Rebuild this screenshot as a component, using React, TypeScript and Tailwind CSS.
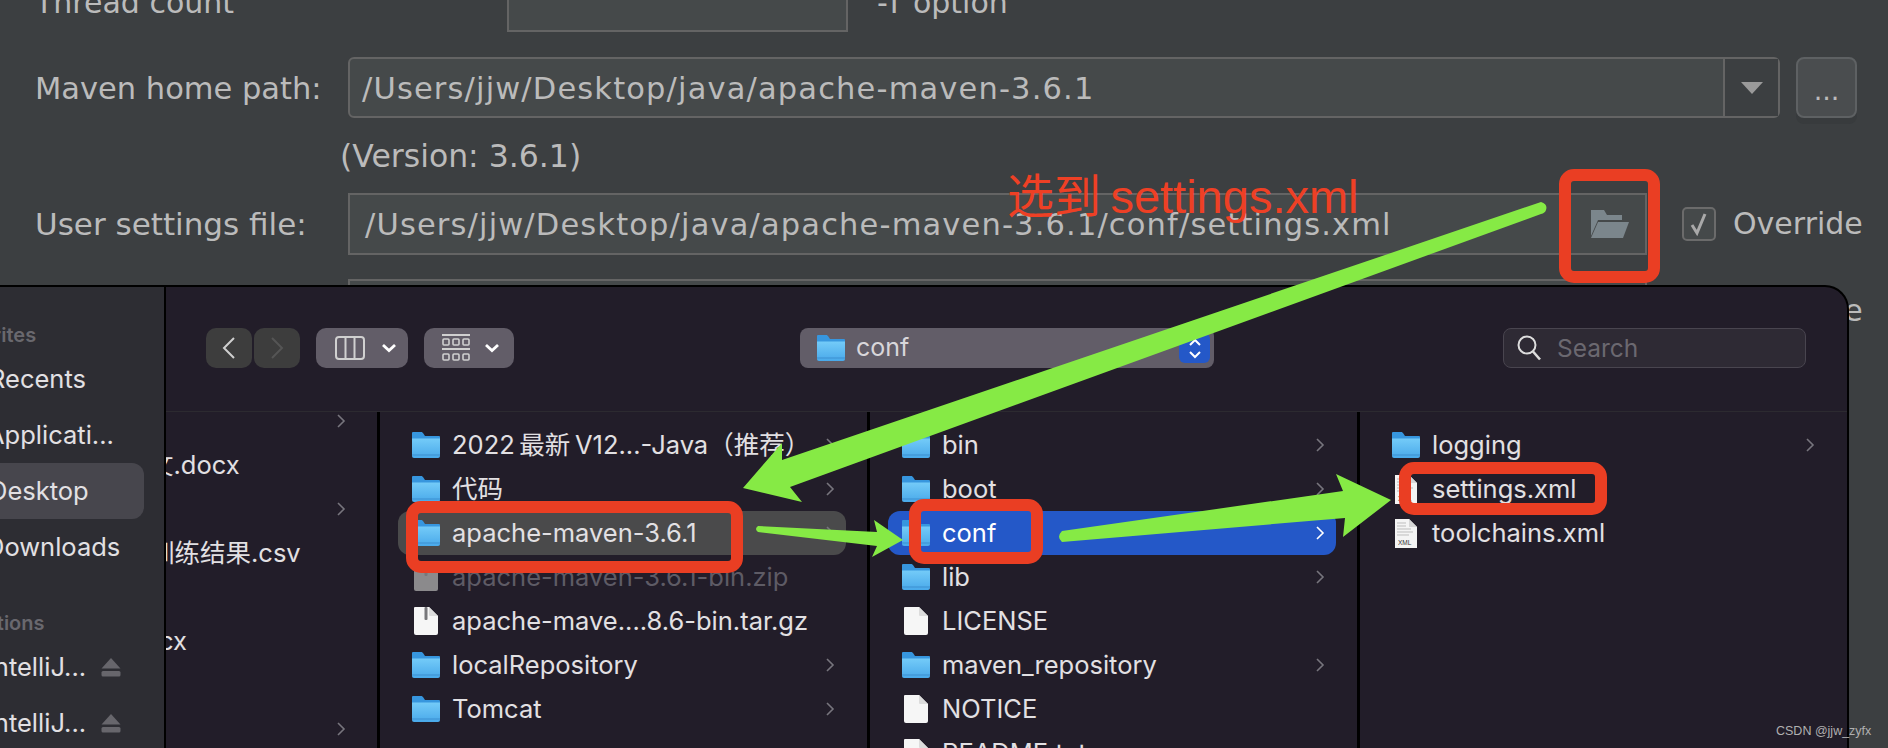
import React from "react";

const FolderIcon = () => (
  <svg width="28" height="26" viewBox="0 0 28 26" className="shrink-0">
    <defs>
      <linearGradient id="folderFront" x1="0" y1="0" x2="0" y2="1">
        <stop offset="0" stopColor="#74cbf8" />
        <stop offset="1" stopColor="#49a9ea" />
      </linearGradient>
    </defs>
    <path d="M1 0h8c1 0 1.500.500 2 1l2 3h14a1 1 0 0 1 1 1v12H0V1a1 1 0 0 1 1-1z" fill="#3796de" />
    <path d="M0 6.500h28V24a2 2 0 0 1-2 2H2a2 2 0 0 1-2-2z" fill="url(#folderFront)" />
    <path d="M0 23h28" stroke="#3d8fd0" strokeWidth="1" />
  </svg>
);

const FileIcon = ({ zip, dim }: { zip?: boolean; dim?: boolean }) => (
  <svg width="28" height="28" viewBox="0 0 28 28" className="shrink-0">
    <path d="M2 1a1 1 0 0 1 1-1h14l9 9v17a2 2 0 0 1-2 2H4a2 2 0 0 1-2-2z" fill={dim ? "#8b8a8c" : "#f6f6f6"} />
    <path d="M17 0l9 9h-8a1 1 0 0 1-1-1z" fill={dim ? "#a8a8a8" : "#dcdcdc"} />
    {zip && <rect x="12.500" y="0" width="3" height="13" rx="1" fill="#77777a" />}
  </svg>
);

const XmlIcon = () => (
  <svg width="28" height="29" viewBox="0 0 28 29" className="shrink-0">
    <path d="M3 0h14l8 8v21H3z" fill="#f4f4f4" />
    <path d="M17 0l8 8h-8z" fill="#d6d6d6" />
    <path d="M5 4h9M5 7h9M5 10h14M5 13h16M5 16h12" stroke="#bdbdbd" strokeWidth="1" />
    <text x="6" y="26" fontSize="6.500" fontFamily="Liberation Sans" fill="#333">XML</text>
  </svg>
);

const Chevron = ({ color = "#77757d" }: { color?: string }) => (
  <svg width="10" height="16" viewBox="0 0 10 16" className="shrink-0">
    <path d="M2 2l6 6-6 6" fill="none" stroke={color} strokeWidth="1.600" />
  </svg>
);

const Eject = () => (
  <svg width="20" height="19" viewBox="0 0 20 19" className="shrink-0">
    <path d="M10 0l9.500 10.500H.5z" fill="#67666c" />
    <rect x=".5" y="13" width="19" height="5.500" rx="1.500" fill="#67666c" />
  </svg>
);

type Row = { name: string; kind: "folder" | "file" | "zip" | "zipDim" | "xml"; arrow?: boolean; sel?: "gray" | "blue" };

const col2: Row[] = [
  { name: "2022\u2009最新\u2009V12...-Java（推荐）", kind: "folder", arrow: true },
  { name: "代码", kind: "folder", arrow: true },
  { name: "apache-maven-3.6.1", kind: "folder", arrow: true, sel: "gray" },
  { name: "apache-maven-3.6.1-bin.zip", kind: "zipDim" },
  { name: "apache-mave....8.6-bin.tar.gz", kind: "zip" },
  { name: "localRepository", kind: "folder", arrow: true },
  { name: "Tomcat", kind: "folder", arrow: true },
];

const col3: Row[] = [
  { name: "bin", kind: "folder", arrow: true },
  { name: "boot", kind: "folder", arrow: true },
  { name: "conf", kind: "folder", arrow: true, sel: "blue" },
  { name: "lib", kind: "folder", arrow: true },
  { name: "LICENSE", kind: "file" },
  { name: "maven_repository", kind: "folder", arrow: true },
  { name: "NOTICE", kind: "file" },
  { name: "README.txt", kind: "file" },
];

const col4: Row[] = [
  { name: "logging", kind: "folder", arrow: true },
  { name: "settings.xml", kind: "xml" },
  { name: "toolchains.xml", kind: "xml" },
];

const FileRow = ({ row }: { row: Row }) => (
  <div
    className={`flex h-[44px] items-center rounded-[12px] pl-[14px] pr-[11px] ${
      row.sel === "gray" ? "bg-[#4a4a4b]" : row.sel === "blue" ? "bg-[#2458c8]" : ""
    }`}
  >
    {row.kind === "folder" && <FolderIcon />}
    {row.kind === "file" && <FileIcon />}
    {row.kind === "zip" && <FileIcon zip />}
    {row.kind === "zipDim" && <FileIcon zip dim />}
    {row.kind === "xml" && <XmlIcon />}
    <span
      className={`ml-[12px] flex-1 whitespace-nowrap text-[25.500px] ${
        row.kind === "zipDim" ? "text-[#5e5b65]" : row.sel === "blue" ? "text-white" : "text-[#e2e0e3]"
      }`}
    >
      {row.name}
    </span>
    {row.arrow && <Chevron color={row.sel === "blue" ? "#ffffff" : "#77757d"} />}
  </div>
);

const Column = ({ rows, last }: { rows: Row[]; last?: boolean }) => (
  <div className={`shrink-0 pl-[18px] pr-[21px] pt-[11px] ${last ? "w-[487px]" : "w-[490px] border-r-[3px] border-black"}`}>
    {rows.map((r) => (
      <FileRow key={r.name} row={r} />
    ))}
  </div>
);

const Sidebar = () => (
  <div className="w-[166px] shrink-0 overflow-hidden border-r-[2px] border-black bg-[#2d2d33] pt-[32px] text-[25.500px] text-[#e2e0e3]">
    <div className="-ml-[53px] h-[32px] whitespace-nowrap text-[20px] leading-[32px] font-semibold text-[#69686e]">Favorites</div>
    <div className="flex h-[56px] items-center -ml-[11px] whitespace-nowrap">Recents</div>
    <div className="flex h-[56px] items-center -ml-[13px] whitespace-nowrap">Applicati...</div>
    <div className="flex h-[56px] w-[144px] items-center overflow-hidden rounded-r-[12px] bg-[#47464d] whitespace-nowrap">
      <span className="-ml-[11px]">Desktop</span>
    </div>
    <div className="flex h-[56px] items-center -ml-[14px] whitespace-nowrap">Downloads</div>
    <div className="-ml-[50px] mt-[32px] h-[32px] whitespace-nowrap text-[20px] leading-[32px] font-semibold text-[#69686e]">Locations</div>
    <div className="flex h-[56px] items-center whitespace-nowrap">
      <span className="-ml-[13px] w-[114px]">IntelliJ...</span>
      <Eject />
    </div>
    <div className="flex h-[56px] items-center whitespace-nowrap">
      <span className="-ml-[13px] w-[114px]">IntelliJ...</span>
      <Eject />
    </div>
  </div>
);

const Toolbar = () => (
  <div className="flex h-[125px] shrink-0 items-start border-b border-[#2c2a30] pl-[40px] pt-[41px]">
    <div className="flex h-[40px] w-[46px] items-center justify-center rounded-[10px] bg-[#3d3d3d]">
      <svg width="16" height="24" viewBox="0 0 16 24">
        <path d="M13 2L3 12l10 10" fill="none" stroke="#cfcfcf" strokeWidth="2" />
      </svg>
    </div>
    <div className="ml-[2px] flex h-[40px] w-[46px] items-center justify-center rounded-[10px] bg-[#3d3d3d]">
      <svg width="16" height="24" viewBox="0 0 16 24">
        <path d="M3 2l10 10L3 22" fill="none" stroke="#555555" strokeWidth="2" />
      </svg>
    </div>
    <div className="ml-[16px] flex h-[40px] w-[92px] items-center rounded-[10px] bg-[#625d68] pl-[19px]">
      <svg width="30" height="24" viewBox="0 0 30 24">
        <rect x="1" y="1" width="28" height="22" rx="3" fill="none" stroke="#d0d0d0" strokeWidth="2" />
        <path d="M10.500 1v22M19.500 1v22" stroke="#d0d0d0" strokeWidth="2" />
      </svg>
      <svg width="16" height="10" viewBox="0 0 16 10" className="ml-[16px]">
        <path d="M2 2l6 5.500L14 2" fill="none" stroke="#ffffff" strokeWidth="2.800" />
      </svg>
    </div>
    <div className="ml-[16px] flex h-[40px] w-[90px] items-center rounded-[10px] bg-[#625d68] pl-[18px]">
      <svg width="28" height="28" viewBox="0 0 28 28">
        <path d="M0 1h28M0 15h28" stroke="#d0d0d0" strokeWidth="2" />
        <g fill="none" stroke="#d0d0d0" strokeWidth="1.600">
          <rect x="1" y="5" width="6" height="6" rx="1" />
          <rect x="11" y="5" width="6" height="6" rx="1" />
          <rect x="21" y="5" width="6" height="6" rx="1" />
          <rect x="1" y="20" width="6" height="6" rx="1" />
          <rect x="11" y="20" width="6" height="6" rx="1" />
          <rect x="21" y="20" width="6" height="6" rx="1" />
        </g>
      </svg>
      <svg width="16" height="10" viewBox="0 0 16 10" className="ml-[14px]">
        <path d="M2 2l6 5.500L14 2" fill="none" stroke="#ffffff" strokeWidth="2.800" />
      </svg>
    </div>
    <div className="ml-[286px] flex h-[40px] w-[414px] items-center rounded-[8px] bg-[#625d68] pl-[17px] pr-[4px]">
      <FolderIcon />
      <span className="ml-[11px] flex-1 text-[25px] text-[#d8d6da]">conf</span>
      <div className="flex h-[30px] w-[31px] flex-col items-center justify-center gap-[3px] rounded-[6px] bg-[#2458c8]">
        <svg width="14" height="9" viewBox="0 0 14 9">
          <path d="M2 7l5-5 5 5" fill="none" stroke="#ffffff" strokeWidth="2" />
        </svg>
        <svg width="14" height="9" viewBox="0 0 14 9">
          <path d="M2 2l5 5 5-5" fill="none" stroke="#ffffff" strokeWidth="2" />
        </svg>
      </div>
    </div>
    <div className="ml-[289px] flex h-[40px] w-[303px] items-center rounded-[8px] border border-[#49454f] bg-[#2e2a34] pl-[12px]">
      <svg width="26" height="28" viewBox="0 0 26 28">
        <circle cx="11" cy="11" r="8.500" fill="none" stroke="#dddddd" strokeWidth="2" />
        <path d="M17 17.500l7 8" stroke="#dddddd" strokeWidth="2.600" />
      </svg>
      <span className="ml-[15px] text-[24.500px] text-[#6b6870]">Search</span>
    </div>
  </div>
);

const Col1Row = ({ text, offset, arrow }: { text?: string; offset?: string; arrow?: boolean }) => (
  <div className="flex h-[44px] items-center overflow-hidden pr-[31px] text-[25.500px] text-[#e2e0e3]">
    <span className={`flex-1 whitespace-nowrap ${offset ?? ""}`}>{text}</span>
    {arrow && <Chevron />}
  </div>
);

const FinderWindow = () => (
  <div className="absolute left-0 top-[285px] flex h-[463px] w-[1849px] overflow-hidden rounded-tr-[24px] border-t-[2px] border-r-[2px] border-black bg-[#221d29] font-['Inter','Noto_Sans_CJK_SC',sans-serif]">
    <Sidebar />
    <div className="flex min-w-0 flex-1 flex-col">
      <Toolbar />
      <div className="flex min-h-0 flex-1 overflow-hidden">
        <div className="-mt-[13px] w-[211px] shrink-0">
          <Col1Row arrow />
          <Col1Row text="文.docx" offset="-ml-[18px]" />
          <Col1Row arrow />
          <Col1Row text="训练结果.csv" offset="-ml-[17px]" />
          <Col1Row />
          <Col1Row text="docx" offset="-ml-[38px]" />
          <Col1Row />
          <Col1Row arrow />
        </div>
        <div className="w-[3px] shrink-0 bg-black" />
        <Column rows={col2} />
        <Column rows={col3} />
        <Column rows={col4} last />
      </div>
    </div>
  </div>
);

const Annotations = () => (
  <svg width="1888" height="748" viewBox="0 0 1888 748" className="pointer-events-none absolute left-0 top-0">
    <g fill="none" stroke="#ea3e23" strokeWidth="12">
      <rect x="1565" y="175" width="89" height="102" rx="9" />
      <rect x="412" y="507" width="325" height="60" rx="9" />
      <rect x="915" y="505" width="122" height="53" rx="9" />
      <rect x="1405" y="468" width="196" height="41" rx="9" />
    </g>
    <g fill="#86ea45">
      <path d="M1541 202Q1548 204 1546 210Q1545 213 1541 214L790 487L802 502L743 488L782 443L782 460Z" />
      <path d="M758 526L877 532L874 520L903 540L872 557L877 546L758 532Q754 529 758 526Z" />
      <path d="M1062 531L1343 491L1336 474L1391 500L1343 537L1345 518L1062 542Q1056 537 1062 531Z" />
    </g>
  </svg>
);

const App: React.FC = () => {
  return (
    <div className="relative h-[748px] w-[1888px] overflow-hidden bg-[#3c3f41] font-['DejaVu_Sans',sans-serif] text-[30px] text-[#bbbbbb]">
      {/* IDE settings form behind the file dialog */}
      <div className="-mt-[28px] flex flex-col">
        <div className="flex h-[60px] items-start">
          <div className="flex h-[60px] w-[507px] items-center pl-[35px]">Thread count</div>
          <div className="h-[60px] w-[341px] border-2 border-[#646464] bg-[#45494a]" />
          <div className="ml-[29px] flex h-[60px] items-center">-T option</div>
        </div>
        <div className="mt-[25px] flex h-[61px] items-center">
          <div className="w-[348px] pl-[35px] pt-[2px] text-[30.500px]">Maven home path:</div>
          <div className="flex h-[61px] w-[1432px] items-center rounded-[6px] border-2 border-[#646464] bg-[#45494a]">
            <div className="flex-1 pl-[12px] pt-[2px] tracking-[1.150px] text-[30.500px]">/Users/jjw/Desktop/java/apache-maven-3.6.1</div>
            <div className="flex h-full w-[55px] items-center justify-center border-l-2 border-[#646464] bg-[#3c3f41]">
              <svg width="22" height="12" viewBox="0 0 22 12">
                <path d="M0 0h22L11 12z" fill="#9a9a9a" />
              </svg>
            </div>
          </div>
          <div className="ml-[16px] flex h-[61px] w-[61px] items-center justify-center rounded-[8px] border-2 border-[#5e6163] bg-[#4a4d4f] pt-[8px] text-[27px] shadow-[0_6px_0_#383b3d]">
            ...
          </div>
        </div>
        <div className="flex h-[75px] items-center pl-[340px] pt-[3px] text-[31.500px]">(Version: 3.6.1)</div>
        <div className="flex h-[62px] items-center">
          <div className="w-[348px] pl-[35px] pt-[1px] text-[31px]">User settings file:</div>
          <div className="flex h-[62px] w-[1299px] items-center border-2 border-[#646464] bg-[#45494a]">
            <div className="flex-1 pl-[15px] pt-[1px] tracking-[1.150px] text-[30.500px]">/Users/jjw/Desktop/java/apache-maven-3.6.1/conf/settings.xml</div>
            <svg width="40" height="30" viewBox="0 0 40 30" className="mr-[15px]">
              <path d="M1 1h13l3 5h15v5H8L1 27z" fill="#7b868c" />
              <path d="M8 13h31l-6 16H1z" fill="#7b868c" />
            </svg>
          </div>
          <div className="ml-[35px] flex h-[34px] w-[34px] items-center justify-center rounded-[5px] border-2 border-[#6b6b6b] bg-[#45494a]">
            <svg width="20" height="24" viewBox="0 0 20 24">
              <path d="M3 13l5 8L16 2" fill="none" stroke="#a9a9a9" strokeWidth="3" />
            </svg>
          </div>
          <div className="ml-[17px] -mt-[2px]">Override</div>
        </div>
        <div className="mt-[24px] flex h-[62px] items-center">
          <div className="ml-[348px] h-[62px] w-[1299px] border-2 border-[#646464] bg-[#45494a]" />
          <div className="ml-[86px]">Override</div>
        </div>
      </div>

      <FinderWindow />

      <Annotations />
      <div className="absolute left-[1007px] top-[167px] font-['Liberation_Sans','Noto_Sans_CJK_SC',sans-serif] text-[47px] leading-[60px] text-[#ee4025]">
        选到{"\u2009"}settings.xml
      </div>
      <div className="absolute left-[1776px] top-[722px] font-['Liberation_Sans',sans-serif] text-[12.500px] text-[#b0b0b0]">
        CSDN @jjw_zyfx
      </div>
    </div>
  );
};

export default App;
